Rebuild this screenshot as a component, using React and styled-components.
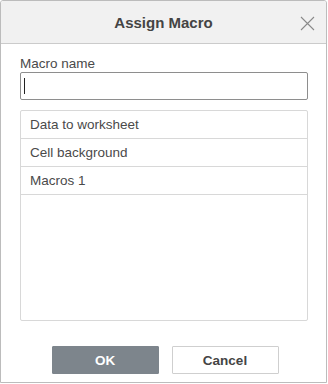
import React from "react";
import styled, { createGlobalStyle } from "styled-components";

const GlobalStyle = createGlobalStyle`
  html, body {
    margin: 0;
    padding: 0;
    background: #fff;
  }
  * {
    box-sizing: border-box;
  }
`;

const Dialog = styled.div`
  width: 327px;
  height: 383px;
  border: 1px solid #bcbcbc;
  border-radius: 3px 3px 0 0;
  background: #fff;
  display: flex;
  flex-direction: column;
  font-family: "Liberation Sans", Arial, sans-serif;
  color: #444;
  overflow: hidden;
`;

const Header = styled.div`
  position: relative;
  height: 43px;
  flex: none;
  background: #f1f1f1;
  border-bottom: 1px solid #cbcbcb;
  display: flex;
  align-items: center;
  justify-content: center;
`;

const Title = styled.h1`
  margin: 0;
  font-size: 15px;
  font-weight: bold;
  color: #444;
  line-height: 18px;
  padding-top: 1px;
`;

const Close = styled.button`
  position: absolute;
  right: 11px;
  top: 14px;
  width: 16px;
  height: 16px;
  padding: 0;
  border: none;
  background: none;
  display: flex;
  align-items: center;
  justify-content: center;
`;

const Body = styled.div`
  flex: 1;
  display: flex;
  flex-direction: column;
  padding: 12px 18px 0 19px;
`;

const Label = styled.label`
  font-size: 13.5px;
  line-height: 16px;
  color: #4a4a4a;
  height: 16px;
`;

const Input = styled.div`
  height: 28px;
  border: 1px solid #8e8e8e;
  border-radius: 2px;
  display: flex;
  align-items: center;
  padding-left: 3px;
`;

const Caret = styled.span`
  width: 1px;
  height: 16px;
  background: #222;
`;

const List = styled.div`
  margin-top: 10px;
  height: 211px;
  border: 1px solid #d8d8d8;
  border-radius: 2px;
  display: flex;
  flex-direction: column;
`;

const Row = styled.div`
  height: 28px;
  flex: none;
  border-bottom: 1px solid #d8d8d8;
  padding-left: 9px;
  display: flex;
  align-items: center;
  font-size: 13.5px;
  color: #4a4a4a;
`;

const Footer = styled.div`
  display: flex;
  justify-content: center;
  gap: 13px;
  padding: 25px 0 0 2px;
`;

const Button = styled.button`
  width: 107px;
  height: 28px;
  border-radius: 1px;
  font-family: "Liberation Sans", Arial, sans-serif;
  font-size: 13.5px;
  font-weight: bold;
  border: 1px solid ${(p) => (p.$primary ? "#7d858c" : "#cfcfcf")};
  background: ${(p) => (p.$primary ? "#7d858c" : "#fff")};
  color: ${(p) => (p.$primary ? "#fff" : "#444")};
  padding: 0;
`;

const macros = ["Data to worksheet", "Cell background", "Macros 1"];

export default function App() {
  return (
    <>
      <GlobalStyle />
      <Dialog>
        <Header>
          <Title>Assign Macro</Title>
          <Close aria-label="Close">
            <svg width="15" height="15" viewBox="0 0 15 15">
              <path d="M1 1L14 14M14 1L1 14" stroke="#8a8a8a" strokeWidth="1.1" fill="none" />
            </svg>
          </Close>
        </Header>
        <Body>
          <Label>Macro name</Label>
          <Input>
            <Caret />
          </Input>
          <List>
            {macros.map((m) => (
              <Row key={m}>{m}</Row>
            ))}
          </List>
          <Footer>
            <Button $primary>OK</Button>
            <Button>Cancel</Button>
          </Footer>
        </Body>
      </Dialog>
    </>
  );
}
